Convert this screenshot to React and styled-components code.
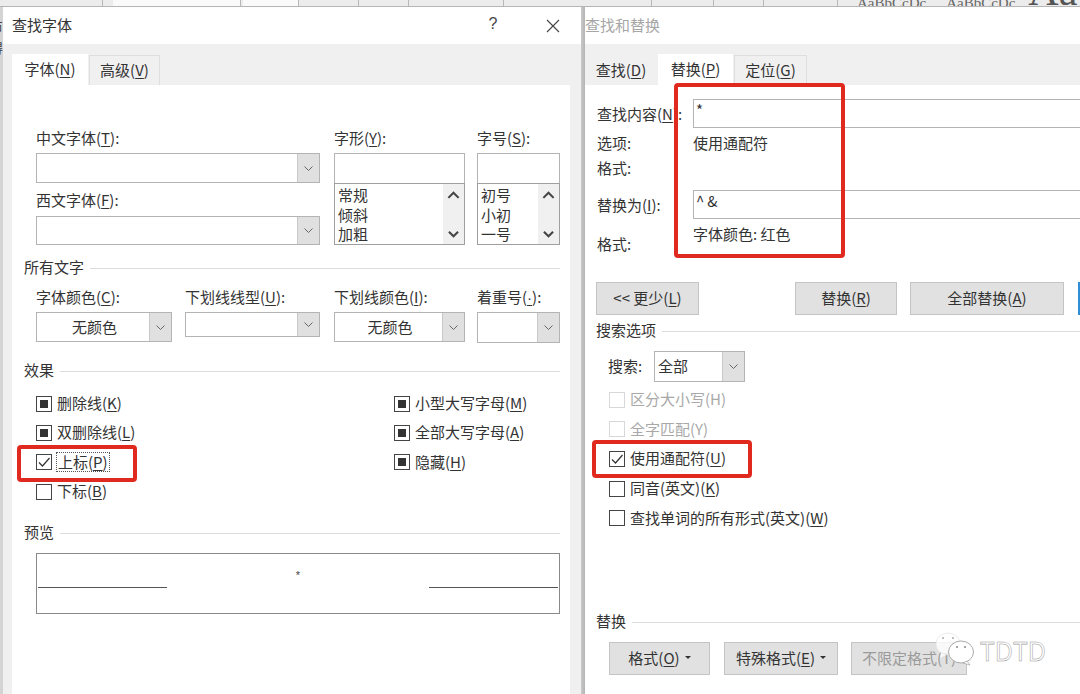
import React from "react";
import styled, { createGlobalStyle } from "styled-components";

const Global = createGlobalStyle`
  html, body { margin: 0; padding: 0; background: #fff; overflow: hidden; }
  body { font-family: "Noto Sans CJK SC", "Noto Sans", sans-serif; font-size: 15px; color: #333; }
`;

const Page = styled.div`
  position: relative; width: 1080px; height: 694px; overflow: hidden;
  display: flex; flex-direction: column; background: #fff;
`;
const Ribbon = styled.div`
  height: 7px; flex: none; display: flex; background: #ececec;
  border-bottom: 1px solid #b5b5b5; box-sizing: border-box; overflow: hidden;
`;
const RibbonCell = styled.div`
  flex: none; width: ${p => p.$w}px; height: 100%; box-sizing: border-box;
  border-right: 1px solid ${p => p.$plain ? "transparent" : "#b8b8b8"}; display: flex; align-items: flex-end;
  background: ${p => p.$light ? "#fafafa" : "transparent"};
`;
const RibbonText = styled.span`
  font-family: "Liberation Serif", serif; font-size: ${p => p.$size || 15}px; line-height: 1;
  color: ${p => p.$dark ? "#555" : "#666"}; margin-left: ${p => p.$ml || 0}px; margin-bottom: ${p => p.$mb || -5}px; white-space: nowrap;
`;
const Windows = styled.div`flex: 1; display: flex; min-height: 0;`;
const Gutter = styled.div`
  width: 3px; flex: none; background: #d4d4d4; overflow: hidden; display: flex;
  flex-direction: column; align-items: flex-end;
`;
const GutterGlyph = styled.span`font-size: 13px; line-height: 18px; margin-top: ${p => p.$top}px; color: #444;`;
const Dialog = styled.section`
  flex: ${p => p.$grow ? 1 : "none"}; width: ${p => p.$grow ? "auto" : "578px"};
  display: flex; flex-direction: column; min-width: 0; background: #f0f0f0;
`;
const Divider = styled.div`width: 4px; flex: none; background: linear-gradient(90deg, #c9c9c9, #b4b4b4);`;
const TitleBar = styled.header`
  height: 37px; flex: none; box-sizing: border-box; display: flex; align-items: center; background: #fff;
  padding-left: ${p => p.$pl}px; padding-bottom: 3px;
  color: ${p => p.$dim ? "#a6a6a6" : "#333"};
`;
const TitleText = styled.span`flex: 1;`;
const Help = styled.span`width: 20px; text-align: center; font-size: 16px; color: #444; margin-right: 42px; font-family: "Liberation Sans", sans-serif;`;
const Close = styled.span`display: flex; margin-right: 20px; margin-top: 3px;`;
const TabStrip = styled.nav`
  height: 41px; flex: none; display: flex; align-items: flex-end; padding-left: ${p => p.$pl}px; gap: 1px;
`;
const Tab = styled.div`
  width: ${p => p.$w}px; height: ${p => p.$active ? 31 : 30}px; box-sizing: border-box;
  display: flex; align-items: center; justify-content: center; color: #333; padding-bottom: 2px;
  background: ${p => p.$active ? "#fff" : p.$plain ? "transparent" : "#f0f0f0"};
  border: ${p => p.$active || p.$plain ? "0" : "1px solid #dedede"}; border-bottom: 0;
`;
const Panel = styled.div`
  flex: 1; background: #fff; margin-left: ${p => p.$ml}px; margin-right: ${p => p.$mr}px;
  overflow: hidden; min-height: 0;
`;
const LeftBody = styled.div`padding: 45px 10px 0 12px;`;
const U = styled.span`text-decoration: underline; text-underline-offset: 2px; text-decoration-thickness: 1px;`;
const Dot = styled(U)`font-family: "Liberation Sans", sans-serif;`;
const Label = styled.label`
  display: block; height: 18px; line-height: 16px; margin-bottom: 5px; white-space: nowrap; color: #333;
`;
const FontGrid = styled.div`display: grid; grid-template-columns: 298px 143px 83px; margin-left: 12px;`;
const Column = styled.div`
  display: flex; flex-direction: column; width: ${p => p.$w ? `${p.$w}px` : "auto"};
`;
const SecondLabel = styled(Label)`margin-top: 9px; margin-bottom: 6px;`;
const ComboBox = styled.div`
  width: ${p => p.$w ? `${p.$w}px` : "auto"}; height: ${p => p.$h}px; box-sizing: border-box; border: 1px solid #b4b4b4;
  display: flex; background: #fff; flex: none;
`;
const ComboValue = styled.div`
  flex: 1; display: flex; align-items: center; min-width: 0; color: #333; padding: 0 0 2px 3px;
  justify-content: ${p => p.$center ? "center" : "flex-start"};
`;
const ComboArrow = styled.div`
  width: 21px; flex: none; background: #e0e0e0; border-left: 1px solid #c8c8c8; display: flex;
  align-items: center; justify-content: center;
`;
const TextBox = styled.div`height: 30px; box-sizing: border-box; border: 1px solid #b4b4b4; border-bottom: 0; background: #fff;`;
const ListBox = styled.div`height: 62px; box-sizing: border-box; border: 1px solid #9f9f9f; display: flex; background: #fff;`;
const ListItems = styled.div`flex: 1; padding: 1px 0 0 3px; line-height: 19.5px;`;
const ListBar = styled.div`
  width: 21px; flex: none; background: #f0f0f0; display: flex; flex-direction: column;
  justify-content: space-between; align-items: center; padding: 7px 0 6px;
`;
const GroupHead = styled.div`
  display: flex; align-items: flex-start; gap: 6px; height: 18px; line-height: 16px; color: #333;
  margin-top: ${p => p.$mt}px; margin-left: ${p => p.$ml || 0}px;
  &::after { content: ""; flex: 1; height: 1px; background: #dcdcdc; margin-top: 9px; }
`;
const FieldRow = styled.div`display: grid; grid-template-columns: 149px 149px 143px 83px; margin: 12px 0 0 12px;`;
const EffectGrid = styled.div`
  display: grid; grid-template-columns: 358px 1fr; margin: 9px 0 0 12px; --check-row: 29.3px;
`;
const CheckRow = styled.div`
  height: var(--check-row, 29.6px); display: flex; align-items: center; gap: 5px; white-space: nowrap;
  color: ${p => p.$off ? "#a8a8a8" : "#333"};
`;
const CheckText = styled.span`line-height: 18px; padding-bottom: 1px;`;
const Box = styled.span`
  width: 16px; height: 16px; box-sizing: border-box; flex: none; display: flex; align-items: center; justify-content: center;
  border: 1px solid ${p => p.$off ? "#d8d8d8" : "#444"}; background: #fff;
`;
const MixedMark = styled.span`width: 8px; height: 8px; background: #333;`;
const Focused = styled.span`outline: 1px dotted #555; outline-offset: 0; padding: 0 1px; display: inline-block; line-height: 18px;`;
const Preview = styled.div`
  height: 61px; box-sizing: border-box; margin: 11px 0 0 12px; border: 1px solid #8a8a8a;
  display: flex; align-items: flex-start; justify-content: space-between; padding: 0 1px;
`;
const PreviewLine = styled.span`width: 129px; height: 1px; background: #555; margin-top: 33px;`;
const PreviewMark = styled.span`font-size: 11px; line-height: 12px; margin-top: 15px; color: #444; font-family: "Liberation Sans", sans-serif;`;
const RightBody = styled.div`padding: 14px 0 0 12px;`;
const FormRow = styled.div`
  display: grid; grid-template-columns: 96px 1fr; align-items: ${p => p.$start ? "start" : "center"};
  margin-top: ${p => p.$mt || 0}px; line-height: 18px; height: ${p => p.$h}px; white-space: nowrap;
`;
const WideInput = styled.div`
  height: 29px; box-sizing: border-box; border: 1px solid #b4b4b4; border-right: 0; background: #fff;
  padding: 0 0 0 2px; line-height: 20px; color: #333; letter-spacing: ${p => p.$spaced ? 3 : 0}px;
`;
const NudgedLabel = styled.span`position: relative; top: ${p => p.$dy}px;`;
const ButtonRow = styled.div`display: flex; margin: ${p => p.$m};`;
const Button = styled.div`
  flex: none; width: ${p => p.$w}px; height: 33px; box-sizing: border-box; margin-right: ${p => p.$mr || 0}px;
  background: #e1e1e1; border: 1px solid ${p => p.$blue ? "#2f8fd6" : "#c4c4c4"};
  border-width: ${p => p.$blue ? "2px" : "1px"}; padding-bottom: 2px;
  display: flex; align-items: center; justify-content: center; gap: 5px;
  color: ${p => p.$off ? "#9a9a9a" : "#333"}; white-space: nowrap;
`;
const Caret = styled.span`
  width: 0; height: 0; border-left: 3px solid transparent; border-right: 3px solid transparent; border-top: 3px solid #333;
`;
const SearchRow = styled.div`display: flex; align-items: center; margin: 11px 0 3px 11px;`;
const SearchLabel = styled.span`width: 46px; flex: none; padding-bottom: 2px;`;
const CheckList = styled.div`margin-left: 12px;`;
const RedBox = styled.div`
  position: absolute; left: ${p => p.$x}px; top: ${p => p.$y}px; width: ${p => p.$w}px; height: ${p => p.$h}px;
  box-sizing: border-box; border: 4px solid #e12a1f; border-radius: 4px; pointer-events: none;
`;
const Watermark = styled.div`
  position: absolute; left: 934px; top: 631px; display: flex; align-items: center; gap: 4px;
`;
const MarkText = styled.span`
  font-family: "Liberation Sans", sans-serif; font-size: 24px; letter-spacing: 0.5px; line-height: 30px;
  color: #fff; -webkit-text-stroke: 0.5px #9a9a9a; margin-top: 5px; transform: scaleY(1.12);
`;

const Chevron = ({ up, bold }) => (
  <svg width={bold ? 13 : 11} height={bold ? 8 : 7} viewBox="0 0 11 7" fill="none" stroke={bold ? "#444" : "#666"} strokeWidth={bold ? 1.8 : 1}>
    <path d={up ? "M1 6l4.5-4.5L10 6" : "M1.5 1.5L5.5 5.5 9.5 1.5"} />
  </svg>
);
const CheckMark = () => (
  <svg width="14" height="14" viewBox="0 0 14 14" fill="none" stroke="#333" strokeWidth="1.2">
    <path d="M2 7.5l3.5 3.5L12.5 3" />
  </svg>
);
const CloseIcon = () => (
  <svg width="16" height="16" viewBox="0 0 16 16" fill="none" stroke="#444" strokeWidth="1.1">
    <path d="M2 2l12 12M14 2L2 14" />
  </svg>
);
const WeChat = () => (
  <svg width="42" height="36" viewBox="0 0 42 36">
    <ellipse cx="14" cy="13" rx="12" ry="11" fill="#fff" fillOpacity=".8" stroke="#e4e4e4" strokeWidth=".8" />
    <path d="M7 22l-1 5 6-3z" fill="#fff" fillOpacity=".8" />
    <ellipse cx="27" cy="21" rx="12.5" ry="11" fill="#fff" stroke="#aaa" strokeWidth="1" />
    <path d="M33 30l3 4-7-2z" fill="#fff" stroke="#aaa" strokeWidth=".8" />
    <circle cx="9" cy="7" r="1" fill="#aaa" />
    <circle cx="19" cy="7" r="1" fill="#aaa" />
    <circle cx="23" cy="16" r="1" fill="#888" />
    <circle cx="31" cy="16" r="1" fill="#888" />
  </svg>
);

const Combo = ({ w, h, value, center }) => (
  <ComboBox $w={w} $h={h}>
    <ComboValue $center={center}>{value}</ComboValue>
    <ComboArrow><Chevron /></ComboArrow>
  </ComboBox>
);
const Check = ({ state, off, children }) => (
  <CheckRow $off={off}>
    <Box $off={off}>
      {state === "mixed" && <MixedMark />}
      {state === "on" && <CheckMark />}
    </Box>
    <CheckText>{children}</CheckText>
  </CheckRow>
);
const ListField = ({ label, items, w }) => (
  <Column $w={w}>
    <Label>{label}</Label>
    <TextBox />
    <ListBox>
      <ListItems>{items.map(i => <div key={i}>{i}</div>)}</ListItems>
      <ListBar><Chevron up bold /><Chevron bold /></ListBar>
    </ListBox>
  </Column>
);

export default function App() {
  return (
    <Page>
      <Global />
      <Ribbon>
        <RibbonCell $w={103} />
        <RibbonCell $w={10} $plain />
        <RibbonCell $w={128} $light />
        <RibbonCell $w={2} $plain />
        <RibbonCell $w={56} $light />
        <RibbonCell $w={60} />
        <RibbonCell $w={50} />
        <RibbonCell $w={95} />
        <RibbonCell $w={148} />
        <RibbonCell $w={62} />
        <RibbonCell $w={50} />
        <RibbonCell $w={74} />
        <RibbonCell $w={242} $plain>
          <RibbonText $ml={19}>AaBbCcDc</RibbonText>
          <RibbonText $ml={20}>AaBbCcDc</RibbonText>
          <RibbonText $ml={13} $size={42} $mb={-6} $dark>Aa</RibbonText>
        </RibbonCell>
      </Ribbon>
      <Windows>
        <Gutter>
          <GutterGlyph $top={9}>占</GutterGlyph>
          <GutterGlyph $top={5}>得</GutterGlyph>
        </Gutter>
        <Dialog>
          <TitleBar $pl={9}>
            <TitleText>查找字体</TitleText>
            <Help>?</Help>
            <Close><CloseIcon /></Close>
          </TitleBar>
          <TabStrip $pl={9}>
            <Tab $w={76} $active><span>字体(<U>N</U>)</span></Tab>
            <Tab $w={71}><span>高级(<U>V</U>)</span></Tab>
          </TabStrip>
          <Panel $ml={9} $mr={11}>
            <LeftBody>
              <FontGrid>
                <Column>
                  <Label>中文字体(<U>T</U>):</Label>
                  <Combo w={284} h={30} />
                  <SecondLabel>西文字体(<U>F</U>):</SecondLabel>
                  <Combo w={284} h={29} />
                </Column>
                <ListField w={131} label={<>字形(<U>Y</U>):</>} items={["常规", "倾斜", "加粗"]} />
                <ListField w={83} label={<>字号(<U>S</U>):</>} items={["初号", "小初", "一号"]} />
              </FontGrid>
              <GroupHead $mt={14}><span>所有文字</span></GroupHead>
              <FieldRow>
                <Column>
                  <Label>字体颜色(<U>C</U>):</Label>
                  <Combo w={136} h={30} value="无颜色" center />
                </Column>
                <Column>
                  <Label>下划线线型(<U>U</U>):</Label>
                  <Combo w={135} h={25} />
                </Column>
                <Column>
                  <Label>下划线颜色(<U>I</U>):</Label>
                  <Combo w={131} h={30} value="无颜色" center />
                </Column>
                <Column>
                  <Label>着重号(<Dot>·</Dot>):</Label>
                  <Combo w={83} h={31} />
                </Column>
              </FieldRow>
              <GroupHead $mt={19}><span>效果</span></GroupHead>
              <EffectGrid>
                <Column>
                  <Check state="mixed">删除线(<U>K</U>)</Check>
                  <Check state="mixed">双删除线(<U>L</U>)</Check>
                  <Check state="on"><Focused>上标(<U>P</U>)</Focused></Check>
                  <Check>下标(<U>B</U>)</Check>
                </Column>
                <Column>
                  <Check state="mixed">小型大写字母(<U>M</U>)</Check>
                  <Check state="mixed">全部大写字母(<U>A</U>)</Check>
                  <Check state="mixed">隐藏(<U>H</U>)</Check>
                </Column>
              </EffectGrid>
              <GroupHead $mt={18}><span>预览</span></GroupHead>
              <Preview>
                <PreviewLine />
                <PreviewMark>*</PreviewMark>
                <PreviewLine />
              </Preview>
            </LeftBody>
          </Panel>
        </Dialog>
        <Divider />
        <Dialog $grow>
          <TitleBar $pl={0} $dim>
            <TitleText>查找和替换</TitleText>
          </TitleBar>
          <TabStrip $pl={0}>
            <Tab $w={72} $plain><span>查找(<U>D</U>)</span></Tab>
            <Tab $w={75} $active><span>替换(<U>P</U>)</span></Tab>
            <Tab $w={73}><span>定位(<U>G</U>)</span></Tab>
          </TabStrip>
          <Panel $ml={0} $mr={0}>
            <RightBody>
              <FormRow $h={29}>
                <NudgedLabel $dy={0}>查找内容(<U>N</U>):</NudgedLabel>
                <WideInput>*</WideInput>
              </FormRow>
              <FormRow $mt={6} $h={18}><span>选项:</span><span>使用通配符</span></FormRow>
              <FormRow $mt={7} $h={18}><span>格式:</span><span /></FormRow>
              <FormRow $mt={13} $h={29}>
                <NudgedLabel $dy={0}>替换为(<U>I</U>):</NudgedLabel>
                <WideInput $spaced>^&amp;</WideInput>
              </FormRow>
              <FormRow $mt={6} $h={28} $start>
                <NudgedLabel $dy={10}>格式:</NudgedLabel>
                <span>字体颜色: 红色</span>
              </FormRow>
              <ButtonRow $m="29px 0 0 -1px">
                <Button $w={103} $mr={96}><span>&lt;&lt; 更少(<U>L</U>)</span></Button>
                <Button $w={102} $mr={13}><span>替换(<U>R</U>)</span></Button>
                <Button $w={154} $mr={14}><span>全部替换(<U>A</U>)</span></Button>
                <Button $w={40} $blue />
              </ButtonRow>
              <GroupHead $mt={7} $ml={-1}><span>搜索选项</span></GroupHead>
              <SearchRow>
                <SearchLabel>搜索:</SearchLabel>
                <Combo w={91} h={31} value="全部" />
              </SearchRow>
              <CheckList>
                <Check off>区分大小写(H)</Check>
                <Check off>全字匹配(Y)</Check>
                <Check state="on">使用通配符(<U>U</U>)</Check>
                <Check>同音(英文)(<U>K</U>)</Check>
                <Check>查找单词的所有形式(英文)(<U>W</U>)</Check>
              </CheckList>
              <GroupHead $mt={80} $ml={-1}><span>替换</span></GroupHead>
              <ButtonRow $m="11px 0 0 12px">
                <Button $w={101} $mr={14}><span>格式(<U>O</U>)</span><Caret /></Button>
                <Button $w={114} $mr={13}><span>特殊格式(<U>E</U>)</span><Caret /></Button>
                <Button $w={116} $off><span>不限定格式(T)</span></Button>
              </ButtonRow>
            </RightBody>
          </Panel>
        </Dialog>
      </Windows>
      <RedBox $x={17} $y={445} $w={120} $h={37} />
      <RedBox $x={674} $y={83} $w={171} $h={175} />
      <RedBox $x={592} $y={440} $w={160} $h={38} />
      <Watermark>
        <WeChat />
        <MarkText>TDTD</MarkText>
      </Watermark>
    </Page>
  );
}
